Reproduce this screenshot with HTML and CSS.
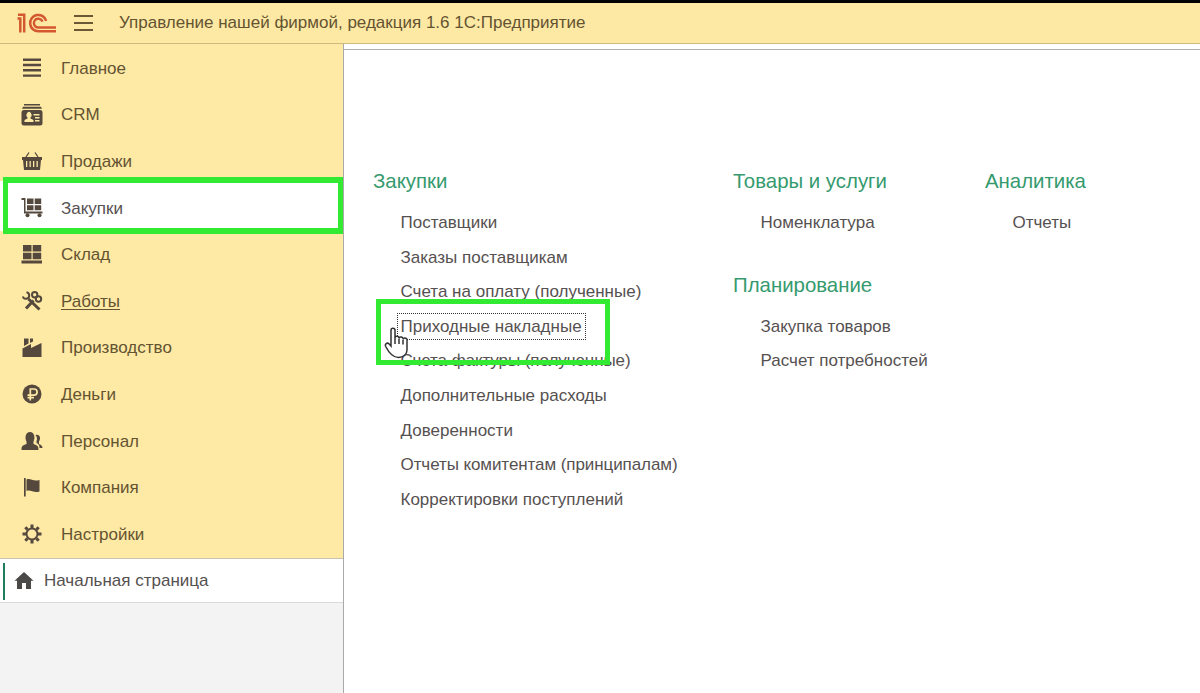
FILE: index.html
```html
<!DOCTYPE html>
<html lang="ru">
	<head>
		<meta charset="utf-8">
		<title>Управление нашей фирмой</title>
		<link rel="stylesheet" href="styles.css">
	</head>
	<body>
		<div class="header">
			<svg class="logo" width="40" height="22" viewBox="0 0 40 22">
				<path d="M0.500 6.500H3.300V20.500M1 2.800H7.200V20.500M39 19.300H21.500a8.200 8.200 0 1 1 7.700-10.500M39 15.500H21.500a4.400 4.400 0 1 1 4-5.800"/>
			</svg>
			<div class="burger"><i></i><i></i><i></i></div>
			<h1>Управление нашей фирмой, редакция 1.6 1С:Предприятие</h1>
		</div>
		<div class="main">
			<div class="side">
				<ul class="menu">
					<li><svg viewBox="0 0 22 22"><path d="M2 1.500h18v2.400H2zM2 6.800h18v2.400H2zM2 12.100h18v2.400H2zM2 17.400h18v2.400H2z"/></svg><span>Главное</span></li>
					<li><svg viewBox="0 0 22 22"><path d="M3 0h16v1.500H3zM2 2.700h18l1 2H1z"/><rect x="0.500" y="6" width="21" height="15.500" rx="2.500"/><path class="cut" d="M3.500 18v-2l3-1.500v-1a2.500 3 0 1 1 3 0v1l3 1.500v2zM12.500 10h6v1.500h-6zM14 13h4.500v1.500H14zM14 16h4.500v1.500H14z"/></svg><span>CRM</span></li>
					<li><svg viewBox="0 0 22 22"><path class="line" d="M5 7l3-4.500M17 7l-3-4.500"/><path d="M1 7h20v3H1zM2 10h18l-1 10H3z"/><path class="cut" d="M5 11h1.300v6H5zM8.500 11h1.300v6H8.500zM12 11h1.300v6H12zM15.500 11h1.300v6h-1.300z"/></svg><span>Продажи</span></li>
					<li class="active"><svg viewBox="0 0 22 22"><path d="M0.500 1h4v13.500h17v2H3V3H0.500zM6 1.500h6.500v5.500H6zM13.700 1.500h6.500v5.500h-6.500zM6 8.300h6.500v5H6zM13.700 8.300h6.500v5h-6.500z"/><circle cx="6.500" cy="18.300" r="2"/><circle cx="18.500" cy="18.300" r="2"/></svg><span>Закупки</span></li>
					<li><svg viewBox="0 0 22 22"><path d="M2 1h8.500v6.500H2zM11.700 1h8.500v6.500h-8.500zM2 8.700h8.500v6.500H2zM11.700 8.700h8.500v6.500h-8.500zM0.500 16.500h20.500V19.500H0.500z"/></svg><span>Склад</span></li>
					<li><svg viewBox="0 0 22 22"><path class="thick" d="M7.500 9L18.500 19.500M12.500 10.500L5 18.500"/><path class="ring" d="M5.500 2.200A3.300 3.300 0 1 1 1.800 6.500"/><circle class="ring" cx="13.700" cy="4.800" r="2.700"/><circle class="ring" cx="17.500" cy="9" r="2.700"/></svg><span class="hover">Работы</span></li>
					<li><svg viewBox="0 0 22 22"><path d="M1.500 20v-8.500l8.500-4.500v4l10.500-5V20zM3 1.500h4.500v5L3 9zM9 1.500h3v3l-3 1.500z"/></svg><span>Производство</span></li>
					<li><svg viewBox="0 0 22 22"><circle cx="11" cy="11" r="9.500"/><path class="cutline" d="M9.300 17.500V6H13a3 3 0 0 1 0 6.200H6.500M6.500 14.700h6.500"/></svg><span>Деньги</span></li>
					<li><svg viewBox="0 0 22 22"><path d="M0.500 20c0-4 1-4.500 5-6v-2.500C3.500 8 4.500 2 9 2s5.500 6 3.500 9.500V14c4 1.500 5 2 5 6z"/><path d="M14.500 5c4-1 6 3 3.500 6.500V14c2.500 1 3.500 2 3.500 4H18.500c0-3-1-4-3-5v-2c1-2 0.500-4-1-6z"/></svg><span>Персонал</span></li>
					<li><svg viewBox="0 0 22 22"><path d="M3 1h1.700v18.500H3zM5.500 2.500c4-2 6 2.500 13 0.500v11.500c-6 2-9-2.500-13-0.500z"/></svg><span>Компания</span></li>
					<li><svg viewBox="0 0 22 22"><circle class="ring" cx="11" cy="11" r="5.500"/><path class="teeth" d="M11 1.500V5M11 17v3.500M1.500 11H5M17 11h3.500M4.300 4.300l2.300 2.300M15.400 15.400l2.300 2.300M4.300 17.700l2.300-2.300M15.400 6.600l2.300-2.300"/></svg><span>Настройки</span></li>
				</ul>
				<div class="home">
					<svg viewBox="0 0 20 18"><path d="M10 0l9.500 8.700h-2.500V17h-5v-6H8v6H3V8.700H0.500z"/></svg>
					<span>Начальная страница</span>
				</div>
				<div class="mark mark-menu"></div>
			</div>
			<div class="content">
				<div class="col col-buy">
					<h2>Закупки</h2>
					<ul class="links">
						<li>Поставщики</li>
						<li>Заказы поставщикам</li>
						<li>Счета на оплату (полученные)</li>
						<li><span class="focus">Приходные накладные</span></li>
						<li class="tight">Счета фактуры (полученные)</li>
						<li>Дополнительные расходы</li>
						<li>Доверенности</li>
						<li class="tight">Отчеты комитентам (принципалам)</li>
						<li>Корректировки поступлений</li>
					</ul>
					<div class="mark mark-link"></div>
					<svg class="cursor" width="26" height="34" viewBox="0 0 26 34">
						<path d="M7 20V4.200a2 2 0 0 1 4 0V12a2 2 0 0 1 4 0.500a2 2 0 0 1 4 1a2 2 0 0 1 4 1.500v9c0 4-3.500 7.500-8.500 7.500C9 31.500 4.500 26 1.700 20.500c-1.200-2.500 1.500-4.500 3.500-2.500z"/>
						<path d="M11 12v6M15 13v5M19 14v4.500"/>
					</svg>
				</div>
				<div class="col col-goods">
					<h2>Товары и услуги</h2>
					<ul class="links">
						<li>Номенклатура</li>
					</ul>
					<h2>Планирование</h2>
					<ul class="links">
						<li>Закупка товаров</li>
						<li>Расчет потребностей</li>
					</ul>
				</div>
				<div class="col">
					<h2>Аналитика</h2>
					<ul class="links">
						<li>Отчеты</li>
					</ul>
				</div>
			</div>
		</div>
	</body>
</html>
```
FILE: styles.css
```css
*{
	margin: 0;
	padding: 0;
	box-sizing: border-box;
}
body{
	height: 693px;
	overflow: hidden;
	display: flex;
	flex-direction: column;
	font-family: "Liberation Sans", Arial, sans-serif;
	font-size: 17px;
	color: #565151;
	background: #fff;
}
ul{
	list-style: none;
}
.header{
	height: 44px;
	flex: none;
	display: flex;
	align-items: center;
	padding-left: 17px;
	background: #fde9a4;
	border-top: 3px solid #000;
	border-bottom: 1px solid #cdbb82;
	color: #645331;
}
.header h1{
	font-size: 17px;
	font-weight: normal;
	margin-left: 26px;
}
.logo{
	fill: none;
	stroke: #d4582f;
	stroke-width: 2.5;
}
.burger{
	width: 19px;
	margin-left: 17px;
	display: flex;
	flex-direction: column;
	gap: 5px;
}
.burger i{
	height: 2px;
	background: #6b5836;
}
.main{
	flex: 1;
	display: flex;
}
.side{
	width: 344px;
	position: relative;
	background: #f3f3f3;
	border-right: 1px solid #a9a9a9;
}
.menu{
	height: 514px;
	padding-top: 1px;
	background: #fee9a5;
	color: #645331;
}
.menu li{
	height: 46.6px;
	display: flex;
	align-items: center;
	padding-left: 21px;
}
.menu svg{
	width: 22px;
	height: 22px;
	margin-right: 18px;
	fill: #55483c;
}
.menu .active{
	background: #fff;
	box-shadow: 0 -4px #fff;
	color: #565151;
}
.menu .cut{
	fill: #fee9a5;
}
.menu .cutline{
	fill: none;
	stroke: #fee9a5;
	stroke-width: 1.7;
}
.menu .line, .menu .ring, .menu .thick, .menu .teeth{
	fill: none;
	stroke: #55483c;
	stroke-width: 1.3;
}
.menu .ring{
	stroke-width: 2;
}
.menu .thick, .menu .teeth{
	stroke-width: 3;
}
.menu span{
	padding-top: 1px;
}
.hover{
	text-decoration: underline;
	text-underline-offset: 2px;
}
.home{
	height: 45px;
	display: flex;
	align-items: center;
	padding-left: 14px;
	background: linear-gradient(#1f7d5b, #1f7d5b) 3px 4px / 2px 37px no-repeat #fff;
	border-top: 1px solid #c9c3b3;
	border-bottom: 1px solid #d9d9d9;
}
.home svg{
	width: 20px;
	height: 18px;
	margin-right: 10px;
	fill: #4b4848;
}
.content{
	flex: 1;
	display: flex;
	position: relative;
	margin-top: 5px;
	padding: 117px 0 0 29px;
	border-top: 1px solid #b0b0b0;
}
.col-buy{
	width: 360px;
}
.col-goods{
	width: 252px;
}
.col h2{
	height: 39px;
	line-height: 29px;
	font-size: 20.4px;
	font-weight: normal;
	color: #359a6e;
}
.links{
	padding-left: 27.5px;
	margin-bottom: 30px;
}
.links li{
	height: 34.6px;
	line-height: 34.6px;
	white-space: nowrap;
}
.links .tight{
	letter-spacing: -0.08px;
}
.focus{
	outline: 1px dotted #333;
	outline-offset: 3px;
}
/* green frames over the menu item and the link */
.mark{
	position: absolute;
	border: 5px solid #32ea32;
}
.mark-menu{
	left: 3px;
	top: 133px;
	width: 340px;
	height: 57px;
	border-width: 6px 5px;
}
.mark-link{
	left: 32px;
	top: 249px;
	width: 234px;
	height: 66px;
}
.cursor{
	position: absolute;
	left: 40px;
	top: 276px;
	fill: #fff;
	stroke: #333;
	stroke-width: 1.5;
}
```
